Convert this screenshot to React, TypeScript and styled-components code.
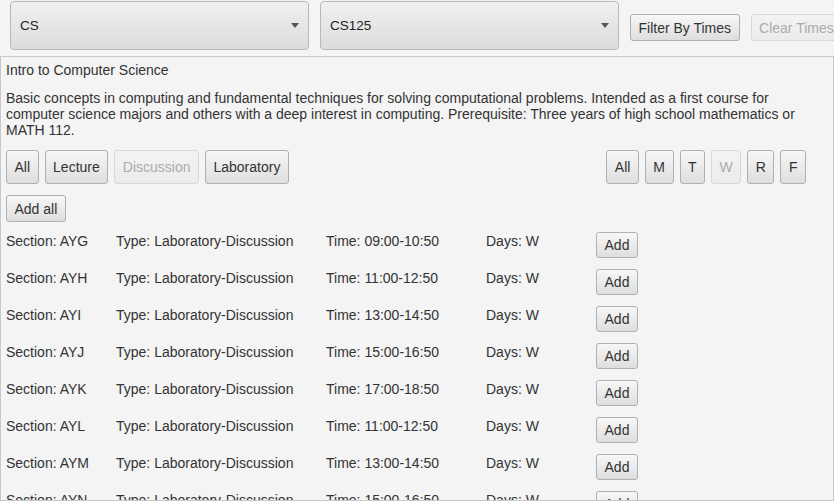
import React from "react";
import styled, { createGlobalStyle, css } from "styled-components";

const Global = createGlobalStyle`
  html, body { margin: 0; padding: 0; background: #f4f4f4; }
  body { font-family: "Liberation Sans", Arial, sans-serif; font-size: 14px; color: #333; }
  * { box-sizing: border-box; }
`;

const Root = styled.div`
  width: 834px;
  height: 501px;
  background: #f4f4f4;
  display: flex;
  flex-direction: column;
  overflow: hidden;
`;

const TopBar = styled.div`
  height: 56px;
  display: flex;
  align-items: center;
  gap: 11px;
  padding-left: 10px;
  flex-shrink: 0;
  overflow: hidden;
`;

const Select = styled.div`
  width: 299px;
  height: 49px;
  margin-top: -5px;
  flex-shrink: 0;
  border: 1px solid #b8b8b8;
  border-radius: 4px;
  background: linear-gradient(#f0f0f0, #dcdcdc);
  display: flex;
  align-items: center;
  justify-content: space-between;
  padding: 0 9px 0 9px;
  font-size: 13.5px;
  color: #222;
`;

const Arrow = styled.span`
  width: 0;
  height: 0;
  border-left: 4px solid transparent;
  border-right: 4px solid transparent;
  border-top: 5px solid #555;
`;

const Button = styled.button<{ $disabled?: boolean; $tall?: boolean; $nudge?: boolean }>`
  font-family: "Liberation Sans", Arial, sans-serif;
  font-size: 14px;
  color: #333;
  height: ${(p) => (p.$tall ? "34px" : "27px")};
  padding: 0 7.5px;
  border: 1px solid #b0b0b0;
  border-radius: 3px;
  background: linear-gradient(#f7f7f7, #dedede);
  flex-shrink: 0;
  white-space: nowrap;
  ${(p) => p.$nudge && css`margin-top: -1px;`}
  ${(p) =>
    p.$disabled &&
    css`
      color: #ababab;
      border-color: #d8d8d8;
      background: linear-gradient(#f3f3f3, #ebebeb);
    `}
`;

const Panel = styled.div`
  flex: 1;
  border: 1px solid #c8c8c8;
  padding: 0 5px;
  overflow: hidden;
`;

const Title = styled.div`
  margin-top: 5px;
  line-height: 16px;
`;

const Description = styled.p`
  margin: 12px 0 0;
  line-height: 16px;
`;

const FilterRow = styled.div`
  margin-top: 12px;
  display: flex;
  justify-content: space-between;
  padding-right: 22px;
`;

const Group = styled.div`
  display: flex;
  gap: 6px;
`;

const AddAllRow = styled.div`
  margin-top: 11px;
`;

const SectionList = styled.div`
  margin-top: 10px;
  display: flex;
  flex-direction: column;
`;

const SectionRow = styled.div`
  display: grid;
  grid-template-columns: 110px 210px 160px 110px auto;
  align-items: start;
  height: 37px;
`;

const Cell = styled.span`
  line-height: 16px;
  padding-top: 1px;
`;

const AddButton = styled(Button)`
  height: 26px;
  width: 42px;
  padding: 0;
  justify-self: start;
`;

const sections = [
  ["AYG", "09:00-10:50"],
  ["AYH", "11:00-12:50"],
  ["AYI", "13:00-14:50"],
  ["AYJ", "15:00-16:50"],
  ["AYK", "17:00-18:50"],
  ["AYL", "11:00-12:50"],
  ["AYM", "13:00-14:50"],
  ["AYN", "15:00-16:50"],
];

export default function App() {
  return (
    <Root>
      <Global />
      <TopBar>
        <Select>
          <span>CS</span>
          <Arrow />
        </Select>
        <Select>
          <span>CS125</span>
          <Arrow />
        </Select>
        <Button $nudge>Filter By Times</Button>
        <Button $nudge $disabled>Clear Times</Button>
      </TopBar>
      <Panel>
        <Title>Intro to Computer Science</Title>
        <Description>
          Basic concepts in computing and fundamental techniques for solving computational problems. Intended as a first course for
          computer science majors and others with a deep interest in computing. Prerequisite: Three years of high school mathematics or
          MATH 112.
        </Description>
        <FilterRow>
          <Group>
            <Button $tall>All</Button>
            <Button $tall>Lecture</Button>
            <Button $tall $disabled>Discussion</Button>
            <Button $tall>Laboratory</Button>
          </Group>
          <Group>
            <Button $tall>All</Button>
            <Button $tall>M</Button>
            <Button $tall>T</Button>
            <Button $tall $disabled>W</Button>
            <Button $tall>R</Button>
            <Button $tall>F</Button>
          </Group>
        </FilterRow>
        <AddAllRow>
          <Button>Add all</Button>
        </AddAllRow>
        <SectionList>
          {sections.map(([s, t]) => (
            <SectionRow key={s}>
              <Cell>Section: {s}</Cell>
              <Cell>Type: Laboratory-Discussion</Cell>
              <Cell>Time: {t}</Cell>
              <Cell>Days: W</Cell>
              <AddButton>Add</AddButton>
            </SectionRow>
          ))}
        </SectionList>
      </Panel>
    </Root>
  );
}
